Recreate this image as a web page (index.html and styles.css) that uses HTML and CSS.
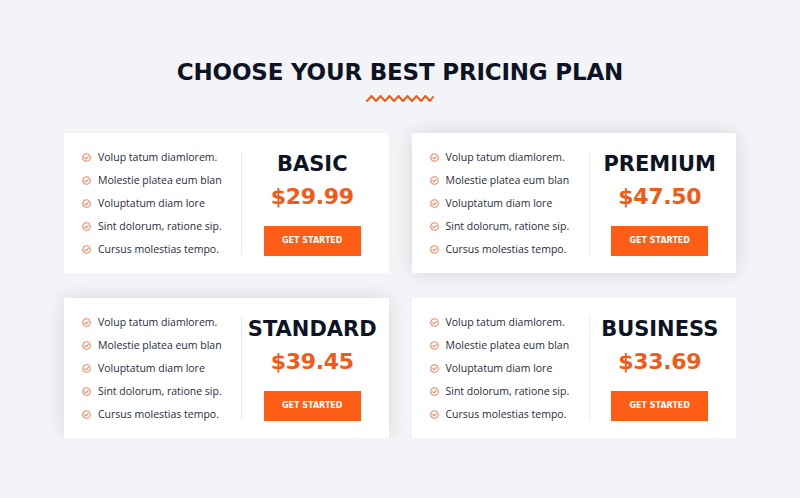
FILE: index.html
```html
<!DOCTYPE html>
<html>
  <head>
    <title>Pricing Plans</title>
    <link rel="stylesheet" href="styles.css">
  </head>
  <body>
    <section class="pricing">
      <h1 class="pricing-title">CHOOSE YOUR BEST PRICING PLAN</h1>
      <svg class="zigzag" width="68" height="9" viewBox="0 0 68 9">
        <polyline points="1,7 5.5,2 10,7 14.5,2 19,7 23.5,2 28,7 32.5,2 37,7 41.5,2 46,7 50.5,2 55,7 59.5,2 64,7 67,3" fill="none" stroke="#f25a16" stroke-width="2" stroke-linejoin="round" stroke-linecap="round"/>
      </svg>

      <div class="plans">
        <div class="plan">
          <ul class="features">
            <li>Volup tatum diamlorem.</li>
            <li>Molestie platea eum blan</li>
            <li>Voluptatum diam lore</li>
            <li>Sint dolorum, ratione sip.</li>
            <li>Cursus molestias tempo.</li>
          </ul>
          <div class="plan-info">
            <h2 class="plan-name">BASIC</h2>
            <div class="plan-price">$29.99</div>
            <button class="plan-btn">GET STARTED</button>
          </div>
        </div>

        <div class="plan raised">
          <ul class="features">
            <li>Volup tatum diamlorem.</li>
            <li>Molestie platea eum blan</li>
            <li>Voluptatum diam lore</li>
            <li>Sint dolorum, ratione sip.</li>
            <li>Cursus molestias tempo.</li>
          </ul>
          <div class="plan-info">
            <h2 class="plan-name">PREMIUM</h2>
            <div class="plan-price">$47.50</div>
            <button class="plan-btn">GET STARTED</button>
          </div>
        </div>

        <div class="plan raised">
          <ul class="features">
            <li>Volup tatum diamlorem.</li>
            <li>Molestie platea eum blan</li>
            <li>Voluptatum diam lore</li>
            <li>Sint dolorum, ratione sip.</li>
            <li>Cursus molestias tempo.</li>
          </ul>
          <div class="plan-info">
            <h2 class="plan-name">STANDARD</h2>
            <div class="plan-price">$39.45</div>
            <button class="plan-btn">GET STARTED</button>
          </div>
        </div>

        <div class="plan">
          <ul class="features">
            <li>Volup tatum diamlorem.</li>
            <li>Molestie platea eum blan</li>
            <li>Voluptatum diam lore</li>
            <li>Sint dolorum, ratione sip.</li>
            <li>Cursus molestias tempo.</li>
          </ul>
          <div class="plan-info">
            <h2 class="plan-name">BUSINESS</h2>
            <div class="plan-price">$33.69</div>
            <button class="plan-btn">GET STARTED</button>
          </div>
        </div>
      </div>
    </section>
  </body>
</html>
```

FILE: styles.css
```css
body {
  margin: 0;
  background-color: #f3f4f7;
  font-family: "Open Sans", Arial, sans-serif;
  color: #1d1f2b;
}

.pricing {
  width: 672px;
  margin: 0 auto;
  padding-top: 58px;
  display: flex;
  flex-direction: column;
  align-items: center;
}

.pricing-title {
  margin: 0;
  font-family: "DejaVu Sans", sans-serif;
  font-size: 23px;
  font-weight: 800;
  line-height: 28px;
  color: #0e1425;
  letter-spacing: -0.2px;
}

.zigzag {
  display: block;
  margin-top: 8px;
}

.plans {
  margin-top: 30px;
  width: 100%;
  display: grid;
  grid-template-columns: 1fr 1fr;
  column-gap: 23px;
  row-gap: 25px;
}

.plan {
  height: 140px;
  background-color: #fff;
  display: flex;
  align-items: center;
  padding: 0 0 0 18px;
  box-sizing: border-box;
}

.plan.raised {
  box-shadow: 0 0 18px rgba(20, 30, 60, 0.13);
}

.features {
  list-style: none;
  margin: 0;
  padding: 0;
  width: 159px;
}

.features li {
  display: flex;
  align-items: center;
  height: 23px;
  font-size: 10.5px;
  color: #2a2c3a;
  white-space: nowrap;
}

.features li::before {
  content: "";
  width: 9px;
  height: 9px;
  margin-right: 7px;
  flex-shrink: 0;
  background: url("data:image/svg+xml;utf8,<svg xmlns='http://www.w3.org/2000/svg' viewBox='0 0 10 10'><circle cx='5' cy='5' r='4.2' fill='none' stroke='%23ec8a63' stroke-width='1.3'/><path d='M3.1 5.2 L4.5 6.5 L7 3.8' fill='none' stroke='%23ec8a63' stroke-width='1.2' stroke-linecap='round' stroke-linejoin='round'/></svg>") no-repeat center / contain;
}

.plan-info {
  flex: 1;
  height: 104px;
  padding-right: 6px;
  border-left: 1px solid #ececec;
  display: flex;
  flex-direction: column;
  align-items: center;
  justify-content: center;
}

.plan-info > * {
  flex-shrink: 0;
}

.plan-name {
  margin: 0;
  font-family: "DejaVu Sans", sans-serif;
  font-size: 21px;
  font-weight: 800;
  line-height: 26px;
  color: #0e1425;
}

.plan-price {
  margin-top: 5px;
  font-family: "DejaVu Sans", sans-serif;
  font-size: 22px;
  font-weight: 800;
  line-height: 30px;
  letter-spacing: -0.3px;
  color: #f25a16;
}

.plan-btn {
  margin-top: 14px;
  width: 97px;
  height: 30px;
  border: none;
  background-color: #fd5d14;
  color: #fff;
  font-family: "DejaVu Sans", sans-serif;
  font-size: 8px;
  font-weight: 700;
  cursor: pointer;
}
```
